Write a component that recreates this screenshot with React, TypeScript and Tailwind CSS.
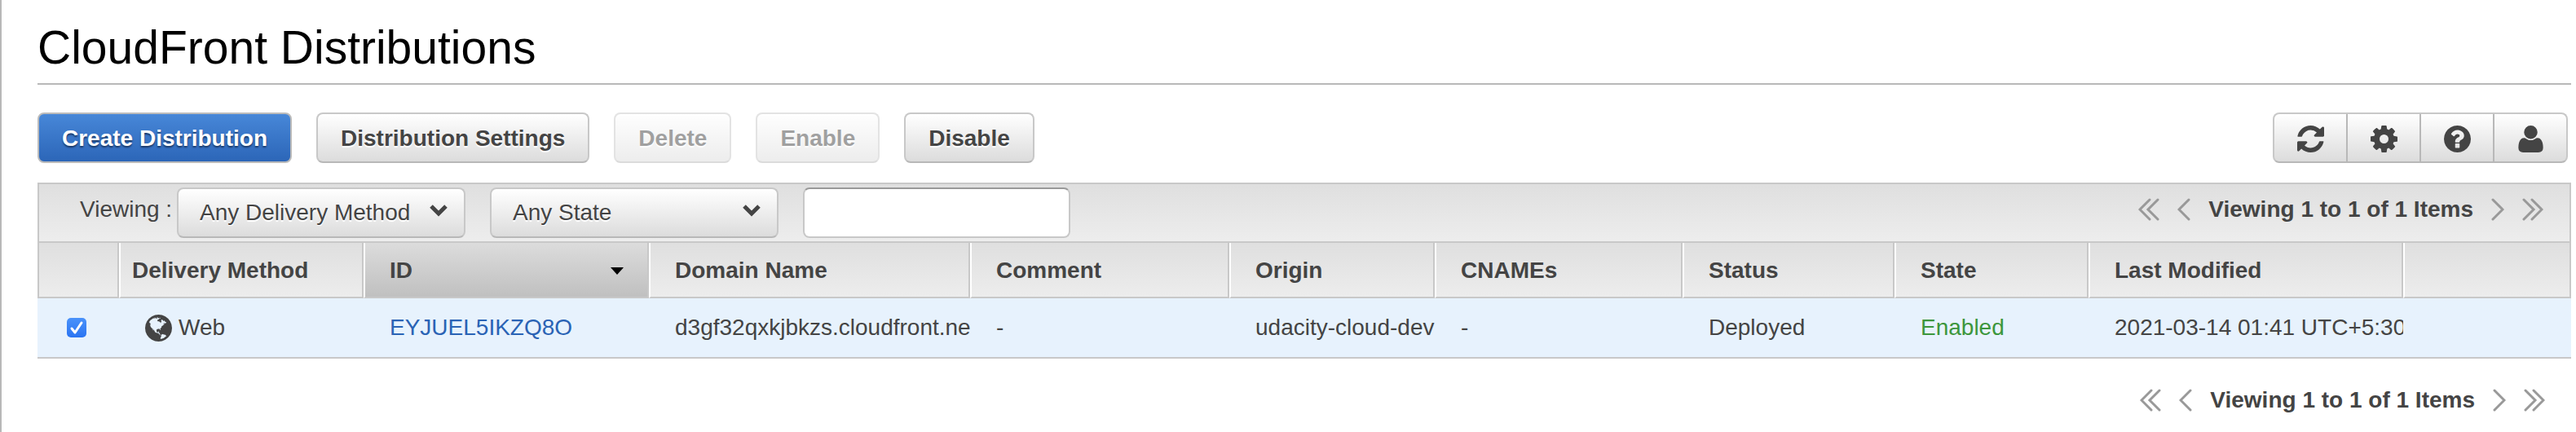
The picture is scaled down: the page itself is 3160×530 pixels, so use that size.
import React from "react";

const GLOBE =
  "M768 128q209 0 385.5 103t279.5 279.5 103 385.5-103 385.5-279.5 279.5-385.5 103-385.5-103-279.5-279.5-103-385.5 103-385.5 279.5-279.5 385.5-103zm274 521q-2 1-9.5 9.5t-13.5 9.5q2 0 4.5-5t5-11 3.5-7q6-7 22-15 14-6 52-12 34-8 51 11-2-2 9.5-13t14.5-12q3-2 15-4.5t15-7.5l2-22q-12 1-17.5-7t-6.5-21q0 2-6 8 0-7-4.5-8t-11.5 1-9 1q-10-3-15-7.5t-8-16.5-4-15q-2-5-9.5-10.5t-9.5-10.5q-1-2-2.5-5.5t-3-6.5-4-5.5-5.5-2.5-7 5-7.5 10-4.5 5q-3-2-6-1.5t-4.5 1-4.5 3-5 3.5q-3 2-8.5 3t-8.5 2q15-5-1-11-10-4-16-3 9-4 7.5-12t-8.5-14h5q-1-4-8.5-8.5t-17.5-8.5-13-6q-8-5-34-9.5t-33-.5q-5 6-4.5 10.5t4 14 3.5 12.5q1 6-5.5 13t-6.5 12q0 7 14 15.5t10 21.5q-3 8-16 16t-16 12q-5 8-1.5 18.5t10.5 16.5q2 2 1.5 4t-3.5 4.5-5.5 4-6.5 3.5l-3 2q-11 5-20.5-6t-13.5-26q-7-25-16-30-23-8-29 1-5-13-41-26-25-9-58-4 6-1 0-15-7-15-19-12 3-6 4-17.5t1-13.5q3-13 12-23 1-1 7-8.5t9.5-13.5.5-6q35 4 50-11 5-5 11.5-17t10.5-17q9-6 14-5.5t14.5 5.5 14.5 5q14 1 15.5-11t-7.5-20q12 1 3-17-4-7-8-9-12-4-27 5-8 4 2 8-1-1-9.5 10.5t-16.5 17.5-16-5q-1-1-5.5-13.5t-9.5-13.5q-8 0-16 15 3-8-11-15t-24-8q19-12-8-27-7-4-20.5-5t-19.5 4q-5 7-5.5 11.5t5 8 10.5 5.5 11.5 4 8.5 3q14 10 8 14-2 1-8.5 3.5t-11.5 4.5-6 4q-3 4 0 14t-2 14q-5-5-9-17.5t-7-16.5q7 9-25 6l-10-1q-4 0-16 2t-20.5 1-13.5-8q-4-8 0-20 1-4 4-2-4-3-11-9.5t-10-8.5q-46 15-94 41 6 1 12-1 5-2 13-6.5t10-5.5q34-14 42-7l5-5q14 16 20 25-7-4-30-1-20 6-22 12 7 12 5 18-4-3-11.5-10t-14.5-11-15-5q-16 0-22 1-146 80-235 222 7 7 12 8 4 1 5 9t2.5 11 11.5-3q9 8 3 19 1-1 44 27 19 17 21 21 3 11-10 18-1-2-9-9t-9-4q-3 5 .5 18.5t10.5 12.5q-7 0-9.5 16t-2.5 35.5-1 23.5l2 1q-3 12 5.5 34.5t21.5 19.5q-13 3 20 43 6 8 8 9 3 2 12 7.5t15 10 10 10.5q4 5 10 22.5t14 23.5q-2 6 9.5 20t10.5 23q-1 0-2.5 1t-2.5 1q3 7 15.5 14t15.5 13q1 3 2 10t3 11 8 2q2-20-24-62-15-25-17-29-3-5-5.5-15.5t-4.5-14.5q2 0 6 1.5t8.5 3.5 7.5 4 2 3q-3 7 2 17.5t12 18.5 17 19 12 13q6 6 14 19.5t0 13.5q9 0 20 10.5t17 19.5q5 8 8 26t5 24q2 7 8.5 13.5t12.5 9.5l16 8 13 7q5 2 18.5 10.5t21.5 11.5q10 4 16 4t14.5-2.5 13.5-3.5q15-2 29 15t21 21q36 19 55 11-2 1 .5 7.5t8 15.5 9 14.5 5.5 8.5q5 6 18 15t18 15q6-4 7-9-3 8 7 20t18 10q14-3 14-32-31 15-49-18 0-1-2.5-5.5t-4-8.5-2.5-8.5 0-7.5 5-3q9 0 10-3.5t-2-12.5-4-13q-1-8-11-20t-12-15q-5 9-16 8t-16-9q0 1-1.5 5.5t-1.5 6.5q-13 0-15-1 1-3 2.5-17.5t3.5-22.5q1-4 5.5-12t7.5-14.5 4-12.5-4.5-9.5-17.5-2.5q-19 1-26 20-1 3-3 10.5t-5 11.5-9 7q-7 3-24 2t-24-5q-13-8-22.5-29t-9.5-37q0-10 2.5-26.5t3-25-5.5-24.5q3-2 9-9.5t10-10.5q2-1 4.5-1.5t4.5 0 4-1.5 3-6q-1-1-4-3-3-3-4-3 7 3 28.5-1.5t27.5 1.5q15 11 22-2 0-1-2.5-9.5t-.5-13.5q5 27 29 9 3 3 15.5 5t17.5 5q3 2 7 5.5t5.5 4.5 5-.5 8.5-6.5q10 14 12 24 11 40 19 44 7 3 11 2t4.5-9.5 0-14-1.5-12.5l-1-8v-18l-1-8q-15-3-18.5-12t1.5-18.5 15-18.5q1-1 8-3.5t15.5-6.5 12.5-8q21-19 15-35 7 0 11-9-1 0-5-3t-7.5-5-4.5-2q9-5 2-16 5-3 7.5-11t7.5-10q9 12 21 2 7-8 1-16 5-7 20.5-10.5t18.5-9.5q7 2 8-2t1-12 3-12q4-5 15-9t13-5l17-11q3-4 0-4 18 2 31-11 10-11-6-20 3-6-3-9.5t-15-5.5q3-1 11.5-.5t10.5-1.5q15-10-7-16-17-5-43 12zm-163 877q206-36 351-189-3-3-12.5-4.5t-12.5-3.5q-18-7-24-8 1-7-2.5-13t-8-9-12.5-8-11-7q-2-2-7-6t-7-5.5-7.5-4.5-8.5-2-10 1l-3 1q-3 1-5.5 2.5t-5.5 3-4 3 0 2.5q-21-17-36-22-5-1-11-5.5t-10.5-7-10-1.5-11.5 7q-5 5-6 15t-2 13q-7-5 0-17.5t2-18.5q-3-6-10.5-4.5t-12 4.5-11.5 8.5-9 6.5-8.5 5.5-8.5 7.5q-3 4-6 12t-5 11q-2-4-11.5-6.5t-9.5-5.5q2 10 4 35t5 38q7 31-12 48-27 25-29 40-4 22 12 26 0 7-8 20.5t-7 21.5q0 6 2 16z";
const REFRESH =
  "M1511 1056q0 5-1 7-64 268-268 434.5t-478 166.5q-146 0-282.5-55t-243.5-157l-129 129q-19 19-45 19t-45-19-19-45v-448q0-26 19-45t45-19h448q26 0 45 19t19 45-19 45l-137 137q71 66 161 102t187 36q134 0 250-65t186-179q11-17 53-117 8-23 30-23h192q13 0 22.5 9.5t9.5 22.5zm25-800v448q0 26-19 45t-45 19h-448q-26 0-45-19t-19-45 19-45l138-138q-148-137-349-137-134 0-250 65t-186 179q-11 17-53 117-8 23-30 23h-199q-13 0-22.5-9.5t-9.5-22.5v-7q65-268 270-434.5t480-166.5q146 0 284 55.5t245 156.5l130-129q19-19 45-19t45 19 19 45z";
const COG =
  "M1024 896q0-106-75-181t-181-75-181 75-75 181 75 181 181 75 181-75 75-181zm512-109v222q0 12-8 23t-20 13l-185 28q-19 54-39 91 35 50 107 138 10 12 10 25t-9 23q-27 37-99 108t-94 71q-12 0-26-9l-138-108q-44 23-91 38-16 136-29 186-7 28-36 28h-222q-14 0-24.5-8.5t-11.5-21.5l-28-184q-49-16-90-37l-141 107q-10 9-25 9-14 0-25-11-126-114-165-168-7-10-7-23 0-12 8-23 15-21 51-66.5t54-70.5q-27-50-41-99l-183-27q-13-2-21-12.5t-8-23.5v-222q0-12 8-23t19-13l186-28q14-46 39-92-40-57-107-138-10-12-10-24 0-10 9-23 26-36 98.5-107.5t94.5-71.5q13 0 26 10l138 107q44-23 91-38 16-136 29-186 7-28 36-28h222q14 0 24.5 8.5t11.5 21.5l28 184q49 16 90 37l142-107q9-9 24-9 13 0 25 10 129 119 165 170 7 8 7 22 0 12-8 23-15 21-51 66.5t-54 70.5q26 50 41 98l183 28q13 2 21 12.5t8 23.5z";
const HELP =
  "M896 1376v-192q0-14-9-23t-23-9h-192q-14 0-23 9t-9 23v192q0 14 9 23t23 9h192q14 0 23-9t9-23zm256-672q0-88-55.5-163t-138.5-116-170-41q-243 0-371 213-15 24 8 42l132 100q7 6 19 6 16 0 25-12 53-68 86-92 34-24 86-24 48 0 85.5 26t37.5 59q0 38-20 61t-68 45q-63 28-115.5 86.5t-52.5 125.5v36q0 14 9 23t23 9h192q14 0 23-9t9-23q0-19 21.5-49.5t54.5-49.5q32-18 49-28.5t46-35 44.5-48 28-60.5 12.5-81zm384 192q0 209-103 385.5t-279.5 279.5-385.5 103-385.5-103-279.5-279.5-103-385.5 103-385.5 279.5-279.5 385.5-103 385.5 103 279.5 279.5 103 385.5z";
const USER =
  "M1472 1405q0 120-73 189.5t-194 69.5h-874q-121 0-194-69.5t-73-189.5q0-53 3.5-103.5t14-109 26.5-108.5 43-97.5 62-81 85.5-53.5 111.5-20q9 0 42 21.5t74.5 48 108 48 133.5 21.5 133.5-21.5 108-48 74.5-48 42-21.5q61 0 111.5 20t85.5 53.5 62 81 43 97.5 26.5 108.5 14 109 3.5 103.5zm-320-893q0 159-112.5 271.5t-271.5 112.5-271.5-112.5-112.5-271.5 112.5-271.5 271.5-112.5 271.5 112.5 112.5 271.5z";

function Glyph({ d }: { d: string }) {
  return (
    <svg viewBox="0 128 1536 1536" className="size-[33px] shrink-0 fill-current" aria-hidden="true">
      <path d={d} />
    </svg>
  );
}

const FACE =
  "border-2 border-[#c8c8c8] border-b-[#b8b8b8] bg-linear-to-b from-white to-[#dcdcdc] text-[#444] [text-shadow:0_2px_1px_#fff]";

function ToolButton({
  children,
  primary,
  disabled,
}: {
  children: string;
  primary?: boolean;
  disabled?: boolean;
}) {
  const look = primary
    ? "border-2 border-[#bbb] bg-linear-to-b from-[#4787d8] to-[#2c66b8] text-white [text-shadow:0_2px_2px_#1a3866]"
    : FACE;
  return (
    <button
      type="button"
      disabled={disabled}
      className={`h-[62px] rounded-lg px-7 pt-[2px] text-[28px] leading-8 font-bold whitespace-nowrap disabled:opacity-50 ${look}`}
    >
      {children}
    </button>
  );
}

function FilterSelect({ label, options }: { label: string; options: string[] }) {
  return (
    <div className="relative w-[354px]">
      <select
        aria-label={label}
        className={`h-[62px] w-full appearance-none rounded-lg pr-14 pl-[26px] text-[28px] leading-8 ${FACE}`}
      >
        {options.map((o) => (
          <option key={o}>{o}</option>
        ))}
      </select>
      <svg
        viewBox="0 0 22 16"
        className="pointer-events-none absolute top-[20px] right-[22px] h-4 w-[22px]"
        fill="none"
        stroke="#444"
        strokeWidth="5"
        aria-hidden="true"
      >
        <path d="M2 3l9 9 9-9" />
      </svg>
    </div>
  );
}

function Arrow({ label, points, wide }: { label: string; points: string; wide?: boolean }) {
  return (
    <button type="button" aria-label={label} className="text-[#999]">
      <svg
        viewBox={wide ? "0 0 26 28" : "0 0 16 28"}
        className={wide ? "h-7 w-[26px]" : "h-7 w-4"}
        fill="none"
        stroke="currentColor"
        strokeWidth="3"
        strokeLinecap="round"
      >
        <path d={points} />
      </svg>
    </button>
  );
}

function Pager() {
  return (
    <nav aria-label="Pages" className="flex items-center gap-[22px]">
      <Arrow wide label="First page" points="M14 2L2 14l12 12M24 2L12 14l12 12" />
      <Arrow label="Previous page" points="M14 2L2 14l12 12" />
      <span className="text-[28px] leading-8 font-bold whitespace-nowrap">Viewing 1 to 1 of 1 Items</span>
      <Arrow label="Next page" points="M2 2l12 12L2 26" />
      <Arrow wide label="Last page" points="M2 2l12 12L2 26M12 2l12 12-12 12" />
    </nav>
  );
}

const HEAD = "h-[68px] border-r-2 border-b-2 border-[#c8c8c8] pt-[2px] pb-0 text-left font-bold";
const LINE = "border-l-2 border-l-white pl-[30px]";
const CELL = "h-[74px] overflow-hidden border-b-2 border-[#c8c8c8] bg-[#e7f2fd] pl-8";

export default function App() {
  return (
    <main className="min-h-[530px] border-l-2 border-[#b8b8b8] bg-white pr-[6px] pl-11 font-['Liberation_Sans',Arial,sans-serif] text-[28px] leading-8 text-[#444]">
      <h1 className="border-b-2 border-[#b8b8b8] pt-[26px] pb-[12px] text-[57px] leading-[64px] text-black">
        CloudFront Distributions
      </h1>

      <div className="flex justify-between pt-[34px] pr-1 pb-6">
        <div className="flex gap-[30px]">
          <ToolButton primary>Create Distribution</ToolButton>
          <ToolButton>Distribution Settings</ToolButton>
          <ToolButton disabled>Delete</ToolButton>
          <ToolButton disabled>Enable</ToolButton>
          <ToolButton>Disable</ToolButton>
        </div>
        <div className={`flex h-[62px] w-[362px] divide-x-2 divide-[#b8b8b8] rounded-lg ${FACE}`}>
          {[
            ["Refresh", REFRESH],
            ["Settings", COG],
            ["Help", HELP],
            ["Account", USER],
          ].map(([name, d]) => (
            <button
              key={name}
              type="button"
              aria-label={name}
              className="flex flex-1 items-center justify-center pt-[2px]"
            >
              <Glyph d={d} />
            </button>
          ))}
        </div>
      </div>

      <section className="flex h-[74px] items-start justify-between border-2 border-[#c8c8c8] bg-linear-to-b from-[#dfdfdf] to-[#ededed] pr-8 pl-[50px]">
        <div className="flex pt-1">
          <span className="w-[119px] pt-[11px]">Viewing :</span>
          <div className="flex gap-[30px]">
            <FilterSelect label="Delivery method" options={["Any Delivery Method", "Web", "RTMP"]} />
            <FilterSelect label="State" options={["Any State", "Enabled", "Disabled"]} />
            <input
              aria-label="Search"
              type="text"
              className="h-[62px] w-[328px] rounded-lg border-2 border-[#c8c8c8] border-t-[#999] bg-white px-3"
            />
          </div>
        </div>
        <div className="pt-[15px]">
          <Pager />
        </div>
      </section>

      <table className="w-full table-fixed border-separate border-spacing-0 whitespace-nowrap">
        <colgroup>
          <col className="w-[100px]" />
          <col className="w-[300px]" />
          <col className="w-[350px]" />
          <col className="w-[394px]" />
          <col className="w-[318px]" />
          <col className="w-[252px]" />
          <col className="w-[304px]" />
          <col className="w-[260px]" />
          <col className="w-[238px]" />
          <col className="w-[386px]" />
          <col />
        </colgroup>
        <thead className="bg-linear-to-b from-[#dfdfdf] to-[#ededed]">
          <tr>
            <th aria-label="Select" className={`${HEAD} border-l-2`} />
            <th className={`${HEAD} border-l-2 border-l-white pl-[14px]`}>Delivery Method</th>
            <th className={`${HEAD} ${LINE} bg-linear-to-b from-[#dcdcdc] to-[#c0c0c0]`}>
              <span className="flex items-center justify-between pr-[29px]">
                ID
                <svg viewBox="0 0 16 9" className="h-[9px] w-4" aria-hidden="true">
                  <path d="M0 0h16L8 9z" fill="#000" />
                </svg>
              </span>
            </th>
            <th className={`${HEAD} ${LINE}`}>Domain Name</th>
            <th className={`${HEAD} ${LINE}`}>Comment</th>
            <th className={`${HEAD} ${LINE}`}>Origin</th>
            <th className={`${HEAD} ${LINE}`}>CNAMEs</th>
            <th className={`${HEAD} ${LINE}`}>Status</th>
            <th className={`${HEAD} ${LINE}`}>State</th>
            <th className={`${HEAD} ${LINE}`}>Last Modified</th>
            <th aria-label="More" className={`${HEAD} ${LINE}`} />
          </tr>
        </thead>
        <tbody>
          <tr>
            <td className="h-[74px] border-b-2 border-[#c8c8c8] bg-[#e7f2fd] pl-9">
              <span className="relative flex size-6">
                <input
                  type="checkbox"
                  defaultChecked
                  aria-label="Select EYJUEL5IKZQ8O"
                  className="size-6 appearance-none rounded-[5px] bg-linear-to-b from-[#4a92fa] to-[#2a74f2]"
                />
                <svg
                  viewBox="0 0 24 24"
                  className="pointer-events-none absolute inset-0 size-6"
                  fill="none"
                  stroke="#fff"
                  strokeWidth="3"
                  strokeLinecap="round"
                  strokeLinejoin="round"
                  aria-hidden="true"
                >
                  <path d="M6 13l4 5 8-12" />
                </svg>
              </span>
            </td>
            <td className={CELL}>
              <span className="flex items-center gap-2">
                <Glyph d={GLOBE} />
                Web
              </span>
            </td>
            <td className={CELL}>
              <a href="#EYJUEL5IKZQ8O" className="text-[#2a63b5]">
                EYJUEL5IKZQ8O
              </a>
            </td>
            <td className={CELL}>d3gf32qxkjbkzs.cloudfront.ne</td>
            <td className={CELL}>-</td>
            <td className={CELL}>udacity-cloud-dev</td>
            <td className={CELL}>-</td>
            <td className={CELL}>Deployed</td>
            <td className={`${CELL} text-[#3c963c]`}>Enabled</td>
            <td className={CELL}>2021-03-14 01:41 UTC+5:30</td>
            <td className={CELL} />
          </tr>
        </tbody>
      </table>

      <div className="flex justify-end pt-[35px] pr-8">
        <Pager />
      </div>
    </main>
  );
}
